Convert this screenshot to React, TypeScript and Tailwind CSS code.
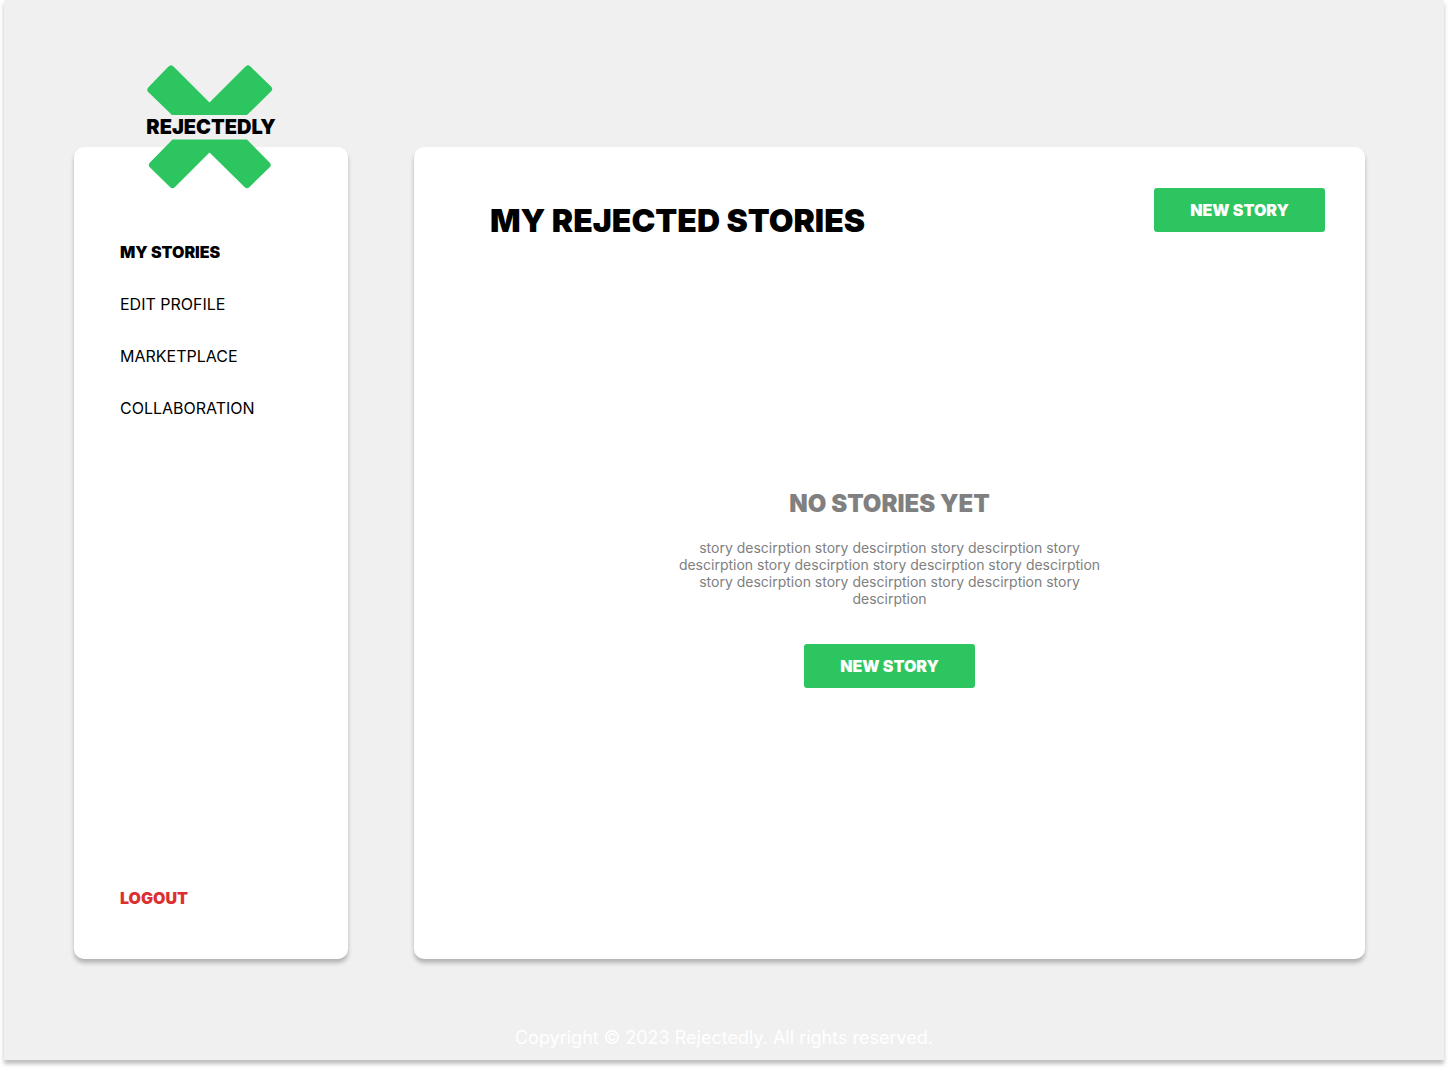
import React from "react";

const navItems = ["EDIT PROFILE", "MARKETPLACE", "COLLABORATION"];

function Logo() {
  return (
    <a href="#home" aria-label="Rejectedly" className="relative -mt-[82px] flex h-[124px] w-[130px] items-center justify-center self-center">
      <svg viewBox="1 0 130 124" className="absolute inset-0 h-full w-full" fill="#2dc560" aria-hidden="true">
        <path d="M27 50 L3.200 27 Q1.200 25 3.200 22.500 L23 2 Q26 -1.300 29 2 L64.500 37.500 L100 2 Q103 -1.300 106 2 L126 21.500 Q128.500 24 126 26.500 L102 50 Z" />
        <path d="M27.500 74.500 H102 L125 98 Q126.500 100 125 102 L104.500 122 Q102 124.500 99.500 122 L64.500 87.500 L30 122 Q27.500 124.500 25 122 L4.500 102 Q3 100 4.500 98 Z" />
      </svg>
      <span className="relative text-xl leading-6 font-black">REJECTEDLY</span>
    </a>
  );
}

function NewStoryButton() {
  return (
    <button type="button" className="h-11 w-[171px] cursor-pointer rounded-[3px] bg-[#2dc560] text-base font-black text-white">
      NEW STORY
    </button>
  );
}

export default function App() {
  return (
    <div className="bg-white px-1 pb-2 font-['Inter',sans-serif] text-black">
      <div className="flex min-h-[1060px] flex-col bg-[#f0f0f0] shadow-[0_4px_4px_rgba(0,0,0,0.25)]">
        <div className="flex grow gap-[66px] pt-[147px] pr-[79px] pl-[70px]">
          <aside className="flex w-[274px] shrink-0 flex-col rounded-[10px] bg-white pb-[49px] shadow-[0_4px_4px_rgba(0,0,0,0.25)]">
            <Logo />
            <nav className="mt-[51px] flex flex-col items-start gap-7 pl-[46px] leading-6">
              <a href="#stories" aria-current="page" className="font-black">MY STORIES</a>
              {navItems.map((item) => (
                <a key={item} href="#section">{item}</a>
              ))}
            </nav>
            <button type="button" className="mt-auto ml-[46px] cursor-pointer self-start leading-6 font-black text-[#dc3030]">LOGOUT</button>
          </aside>
          <main className="flex min-w-0 grow flex-col rounded-[10px] bg-white shadow-[0_4px_4px_rgba(0,0,0,0.25)]">
            <header className="flex items-start justify-between pt-[41px] pr-10 pl-[76px]">
              <h1 className="mt-[13px] text-[32px] leading-10 font-black">MY REJECTED STORIES</h1>
              <NewStoryButton />
            </header>
            <section className="mt-[247px] flex flex-col items-center">
              <h2 className="text-2xl leading-8 font-black text-[#808080]">NO STORIES YET</h2>
              <p className="mt-[19px] mb-[37px] w-[430px] text-center text-sm leading-[17px] text-[#808080]">
                story descirption story descirption story descirption story descirption story descirption story descirption story descirption story descirption story descirption story descirption story descirption
              </p>
              <NewStoryButton />
            </section>
          </main>
        </div>
        <footer className="pt-[67px] pb-[10px] text-center text-lg leading-6 text-white">Copyright © 2023 Rejectedly. All rights reserved.</footer>
      </div>
    </div>
  );
}
